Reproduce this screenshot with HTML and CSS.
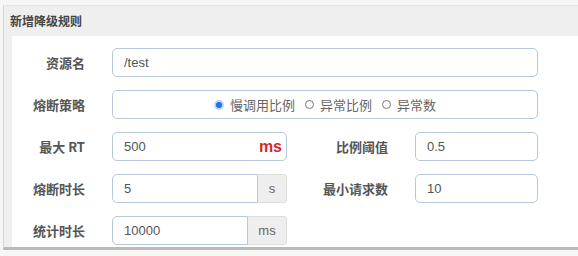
FILE: index.html
```html
<!DOCTYPE html>
<html lang="zh">
<head>
<meta charset="utf-8">
<link rel="stylesheet" href="styles.css">
</head>
<body>
<div class="modal">
  <div class="header">新增降级规则</div>
  <div class="body">
    <form class="grid">
      <label class="lbl">资源名</label>
      <div class="field span3"><input class="inp" value="/test"></div>

      <label class="lbl">熔断策略</label>
      <div class="field span3">
        <div class="inp radios">
          <span class="opt"><span class="radio on"></span>慢调用比例</span>
          <span class="opt"><span class="radio"></span>异常比例</span>
          <span class="opt"><span class="radio"></span>异常数</span>
        </div>
      </div>

      <label class="lbl">最大 RT</label>
      <div class="field"><div class="inp with-unit"><span>500</span><span class="unit-red">ms</span></div></div>
      <label class="lbl">比例阈值</label>
      <div class="field"><input class="inp" value="0.5"></div>

      <label class="lbl">熔断时长</label>
      <div class="field group"><input class="inp left" value="5"><span class="addon s">s</span></div>
      <label class="lbl">最小请求数</label>
      <div class="field"><input class="inp" value="10"></div>

      <label class="lbl">统计时长</label>
      <div class="field group"><input class="inp left" value="10000"><span class="addon ms">ms</span></div>
    </form>
  </div>
</div>
</body>
</html>
```
FILE: styles.css
```css
html, body {
  margin: 0;
  padding: 0;
}
body {
  background: #f6f6f6;
  font-family: "Liberation Sans", "Noto Sans CJK SC", sans-serif;
  width: 578px;
  height: 256px;
  overflow: hidden;
}
.modal {
  margin: 5px 0 0 3px;
  border-left: 1px solid #d4d4d4;
  border-top: 1px solid #e6e6e6;
  background: #efefef;
  border-bottom: 3px solid #b9b9b9;
}
.header {
  height: 30px;
  line-height: 30px;
  padding-left: 6px;
  font-family: "Noto Sans CJK SC", sans-serif;
  font-weight: bold;
  font-size: 12px;
  color: #444;
}
.body {
  margin-left: 8px;
  background: #fff;
  padding: 12px 0 2px 0;
}
.grid {
  margin: 0;
  display: grid;
  grid-template-columns: 100px 175px 128px 123px;
  grid-auto-rows: 29px;
  row-gap: 13px;
}
.lbl {
  font-family: "Noto Sans CJK SC", sans-serif;
  font-weight: bold;
  font-size: 13px;
  color: #555;
  text-align: right;
  padding-right: 27px;
  line-height: 29px;
}
.grid > .lbl:nth-of-type(n) { }
.field {
  display: flex;
  height: 29px;
}
.span3 {
  grid-column: span 3;
}
.inp {
  box-sizing: border-box;
  width: 100%;
  height: 29px;
  margin: 0;
  border: 1px solid #b7c8dd;
  border-radius: 5px;
  padding: 0 11px;
  font-family: "Liberation Sans", "Noto Sans CJK SC", sans-serif;
  font-size: 13px;
  color: #555;
  background: #fff;
  outline: none;
}
.radios {
  display: flex;
  align-items: center;
  justify-content: center;
  gap: 10px;
  color: #666;
  font-family: "Noto Sans CJK SC", sans-serif;
}
.opt {
  display: flex;
  align-items: center;
  gap: 6px;
}
.radio {
  box-sizing: border-box;
  width: 9px;
  height: 9px;
  border-radius: 50%;
  border: 1px solid #777;
  background: #fff;
}
.radio.on {
  border: 2px solid #bcd4f5;
  background: #1a73e8;
  width: 10px;
  height: 10px;
}
.with-unit {
  display: flex;
  align-items: center;
  justify-content: space-between;
  padding-right: 4px;
}
.unit-red {
  color: #d42a2a;
  font-weight: bold;
  font-size: 16px;
}
.group .inp.left {
  border-radius: 5px 0 0 5px;
  flex: 1;
  min-width: 0;
}
.addon {
  box-sizing: border-box;
  height: 29px;
  background: #eeeeee;
  border: 1px solid #dcdcdc;
  border-left: none;
  border-radius: 0 4px 4px 0;
  color: #666;
  font-size: 13px;
  display: flex;
  align-items: center;
  justify-content: center;
}
.addon.s {
  width: 29px;
}
.addon.ms {
  width: 39px;
}
```
